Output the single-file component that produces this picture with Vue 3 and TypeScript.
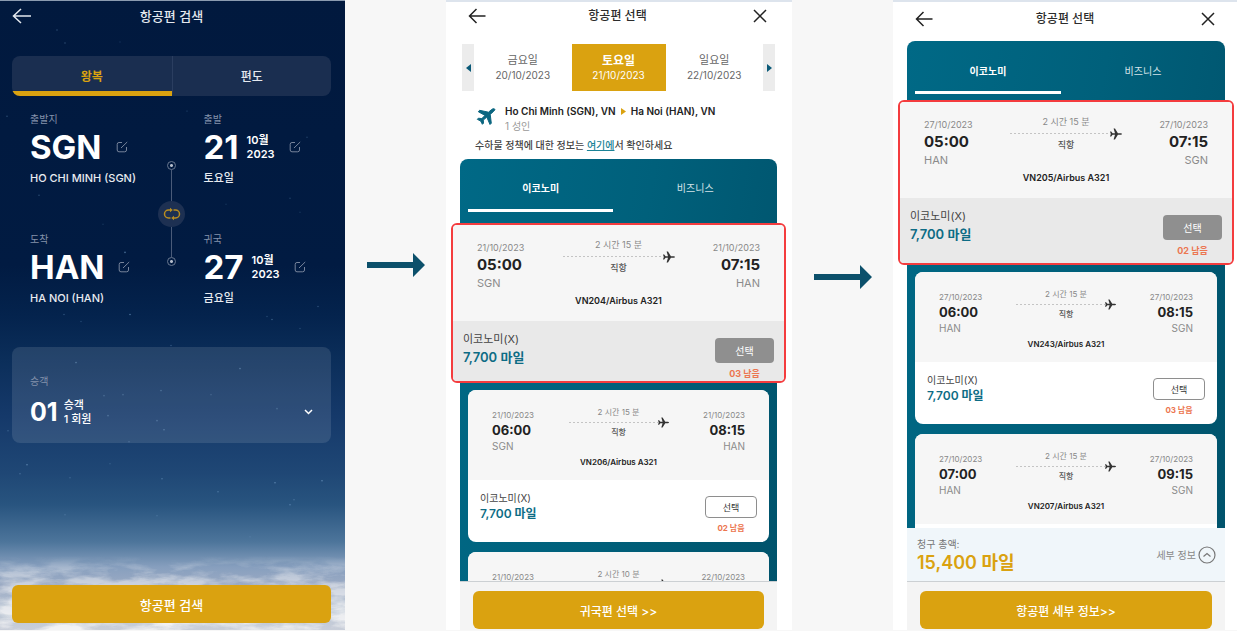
<script setup lang="ts">
import { ref } from 'vue'

interface Stop { date: string; time: string; code: string }
interface Flight { from: Stop; to: Stop; duration: string; plane: string; left: string; picked: boolean }
interface DayOption { weekday: string; date: string; active: boolean }
interface ResultScreen {
  id: string
  days: DayOption[]
  flights: Flight[]
  total: string
  action: string
}

const makeFlight = (
  from: [string, string, string],
  to: [string, string, string],
  duration: string,
  plane: string,
  left: string,
  picked = false,
): Flight => ({
  from: { date: from[0], time: from[1], code: from[2] },
  to: { date: to[0], time: to[1], code: to[2] },
  duration,
  plane,
  left,
  picked,
})

const trip = ref<'round' | 'oneway'>('round')

const legs = [
  { label: '출발지', code: 'SGN', city: 'HO CHI MINH (SGN)', dayLabel: '출발', day: '21', month: '10월', year: '2023', weekday: '토요일' },
  { label: '도착', code: 'HAN', city: 'HA NOI (HAN)', dayLabel: '귀국', day: '27', month: '10월', year: '2023', weekday: '금요일' },
]

const results: ResultScreen[] = [
  {
    id: 'outbound',
    days: [
      { weekday: '금요일', date: '20/10/2023', active: false },
      { weekday: '토요일', date: '21/10/2023', active: true },
      { weekday: '일요일', date: '22/10/2023', active: false },
    ],
    flights: [
      makeFlight(['21/10/2023', '05:00', 'SGN'], ['21/10/2023', '07:15', 'HAN'], '2 시간 15 분', 'VN204/Airbus A321', '03 남음', true),
      makeFlight(['21/10/2023', '06:00', 'SGN'], ['21/10/2023', '08:15', 'HAN'], '2 시간 15 분', 'VN206/Airbus A321', '02 남음'),
      makeFlight(['21/10/2023', '22:10', 'SGN'], ['22/10/2023', '00:20', 'HAN'], '2 시간 10 분', 'VN208/Airbus A321', '02 남음'),
    ],
    total: '',
    action: '귀국편 선택 >>',
  },
  {
    id: 'inbound',
    days: [],
    flights: [
      makeFlight(['27/10/2023', '05:00', 'HAN'], ['27/10/2023', '07:15', 'SGN'], '2 시간 15 분', 'VN205/Airbus A321', '02 남음', true),
      makeFlight(['27/10/2023', '06:00', 'HAN'], ['27/10/2023', '08:15', 'SGN'], '2 시간 15 분', 'VN243/Airbus A321', '03 남음'),
      makeFlight(['27/10/2023', '07:00', 'HAN'], ['27/10/2023', '09:15', 'SGN'], '2 시간 15 분', 'VN207/Airbus A321', '03 남음'),
    ],
    total: '15,400 마일',
    action: '항공편 세부 정보>>',
  },
]

const stars: [number, number, number][] = [
  [57, 29, 0.4], [65, 42, 0.4], [120, 41, 0.2], [7, 115, 0.4], [307, 136, 0.3], [132, 90, 0.3], [187, 110, 0.2],
  [39, 194, 0.4], [125, 251, 0.7], [290, 197, 0.3], [300, 211, 0.2], [226, 203, 0.2], [103, 223, 0.2],
  [64, 313, 0.4], [130, 313, 0.7], [272, 318, 0.5], [267, 315, 0.3], [318, 305, 0.4], [300, 327, 0.3], [81, 320, 0.3],
  [76, 361, 0.6], [240, 367, 0.6], [161, 389, 0.5], [104, 394, 0.4], [123, 393, 0.4], [211, 393, 0.3], [108, 414, 0.5],
  [157, 419, 0.5], [164, 428, 0.6], [129, 440, 0.4], [171, 344, 0.4], [8, 429, 0.4], [27, 463, 0.8], [20, 472, 0.5],
  [162, 477, 0.6], [275, 481, 0.8], [322, 479, 0.8], [218, 490, 0.6], [290, 503, 0.7], [294, 498, 0.5], [65, 513, 0.4],
  [157, 514, 0.4], [250, 535, 0.3], [277, 407, 0.4], [70, 476, 0.4], [110, 462, 0.3],
]
</script>

<template>
  <main class="board">
    <section class="screen search">
      <svg class="sky" viewBox="0 0 345 628" preserveAspectRatio="none" aria-hidden="true">
        <defs>
          <linearGradient id="cloudFade" x1="0" y1="0" x2="0" y2="1">
            <stop offset="0" stop-color="#fff" stop-opacity="0" />
            <stop offset="0.25" stop-color="#fff" stop-opacity="0.45" />
            <stop offset="1" stop-color="#fff" stop-opacity="1" />
          </linearGradient>
          <mask id="cloudMask"><rect x="0" y="554" width="345" height="74" fill="url(#cloudFade)" /></mask>
          <filter id="cloudNoise" x="0" y="0" width="1" height="1">
            <feTurbulence type="fractalNoise" baseFrequency="0.022 0.08" numOctaves="5" seed="8" />
            <feColorMatrix values="0 0 0 0 0.9  0 0 0 0 0.9  0 0 0 0 0.91  3.5 0 0 0 -1.4" />
          </filter>
        </defs>
        <circle v-for="(s, i) in stars" :key="i" :cx="s[0]" :cy="s[1]" r="0.8" fill="#6690ba" :opacity="s[2]" />
        <g mask="url(#cloudMask)"><rect x="0" y="554" width="345" height="74" filter="url(#cloudNoise)" /></g>
      </svg>

      <header class="bar">
        <button class="icon-btn" aria-label="뒤로">
          <svg width="20" height="16" viewBox="0 0 20 16"><path d="M19 8H1.5M9 1 1.5 8 9 15" /></svg>
        </button>
        <h1>항공편 검색</h1>
      </header>

      <div class="trip">
        <button :class="{ on: trip === 'round' }" @click="trip = 'round'">왕복</button>
        <button :class="{ on: trip === 'oneway' }" @click="trip = 'oneway'">편도</button>
      </div>

      <div class="legs">
        <div class="rows">
          <div v-for="leg in legs" :key="leg.code" class="leg">
            <div>
              <p class="hint">{{ leg.label }}</p>
              <p class="big">
                <span>{{ leg.code }}</span>
                <button class="edit" :aria-label="leg.label + ' 수정'">
                  <svg width="12" height="12" viewBox="0 0 12 12"><path d="M6 1.5H3A1.8 1.8 0 0 0 1.200 3.300V9A1.800 1.800 0 0 0 3 10.800H8.700A1.800 1.800 0 0 0 10.500 9V6M5 7 11.200 1" /></svg>
                </button>
              </p>
              <p class="sub">{{ leg.city }}</p>
            </div>
            <div>
              <p class="hint">{{ leg.dayLabel }}</p>
              <p class="big">
                <span>{{ leg.day }}</span>
                <span class="month">{{ leg.month }}<br />{{ leg.year }}</span>
                <button class="edit" :aria-label="leg.dayLabel + ' 수정'">
                  <svg width="12" height="12" viewBox="0 0 12 12"><path d="M6 1.5H3A1.8 1.8 0 0 0 1.200 3.300V9A1.800 1.800 0 0 0 3 10.800H8.700A1.800 1.800 0 0 0 10.500 9V6M5 7 11.200 1" /></svg>
                </button>
              </p>
              <p class="sub">{{ leg.weekday }}</p>
            </div>
          </div>
        </div>
        <div class="stem">
          <i class="ring"></i><i class="line"></i>
          <button class="swap" aria-label="출발지와 도착지 바꾸기">
            <svg width="18" height="14" viewBox="0 0 18 14">
              <path d="M7.500 11H5.500A4 4 0 0 1 5.500 3H8M10.500 3H12.500A4 4 0 0 1 12.500 11H10" />
              <path class="solid" d="M7 .8 9.800 3 7 5.200ZM11 8.800 8.200 11 11 13.200Z" />
            </svg>
          </button>
          <i class="line"></i><i class="ring"></i>
        </div>
      </div>

      <button class="party">
        <span class="hint">승객</span>
        <span class="party-row">
          <strong>01</strong>
          <span class="who">승객<br />1 회원</span>
          <svg width="9" height="6" viewBox="0 0 9 6"><path d="M1 1 4.500 4.500 8 1" /></svg>
        </span>
      </button>

      <button class="cta">항공편 검색</button>
    </section>

    <template v-for="screen in results" :key="screen.id">
      <div class="step">
        <svg width="58" height="24" viewBox="0 0 58 24" aria-hidden="true"><path d="M0 9H46V0L58 12 46 24V15H0Z" /></svg>
      </div>

      <section class="screen result" :class="screen.id">
        <header class="bar">
          <button class="icon-btn" aria-label="뒤로">
            <svg width="18" height="16" viewBox="0 0 18 16"><path d="M17.500 8H1.500M8.500 1 1.500 8 8.500 15" /></svg>
          </button>
          <h2>항공편 선택</h2>
          <button class="icon-btn close" aria-label="닫기">
            <svg width="14" height="14" viewBox="0 0 14 14"><path d="M1 1 13 13M13 1 1 13" /></svg>
          </button>
        </header>

        <template v-if="screen.days.length">
          <nav class="days">
            <button class="turn" aria-label="이전 날짜">
              <svg width="5" height="8" viewBox="0 0 5 8"><path d="M5 0V8L0 4Z" /></svg>
            </button>
            <button v-for="d in screen.days" :key="d.date" class="day" :class="{ active: d.active }">
              <b>{{ d.weekday }}</b>
              <span>{{ d.date }}</span>
            </button>
            <button class="turn" aria-label="다음 날짜">
              <svg width="5" height="8" viewBox="0 0 5 8"><path d="M0 0V8L5 4Z" /></svg>
            </button>
          </nav>
          <div class="route">
            <svg class="route-plane" width="20" height="18" viewBox="0 0 20 18">
              <path d="M18.600 1C17.800.3 16.500.8 15.500 1.600L12.500 4.200 3.600 2.300 2.300 3.700 9 7.400 5.800 10.600 2.400 10.200 1.300 11.300 4.700 13.100 6.400 16.300 7.500 15.200 7.300 12.100 10.800 9.100 14 16.500 15.300 15.200 14.200 6.400 17.700 3.300C18.700 2.400 19.200 1.600 18.600 1Z" />
            </svg>
            <div>
              <p class="cities">
                <span>Ho Chi Minh (SGN), VN</span>
                <svg width="5" height="7" viewBox="0 0 5 7"><path d="M0 0V7L5 3.500Z" /></svg>
                <span>Ha Noi (HAN), VN</span>
              </p>
              <p class="adults">1 성인</p>
            </div>
          </div>
          <p class="policy">수하물 정책에 대한 정보는 <a href="#">여기에</a>서 확인하세요</p>
        </template>

        <div class="panel">
          <div class="cabins">
            <button class="on">이코노미</button>
            <button>비즈니스</button>
          </div>
          <article v-for="f in screen.flights" :key="f.plane" class="card" :class="{ picked: f.picked }">
            <div class="info">
              <div class="times">
                <div class="stop">
                  <span class="date">{{ f.from.date }}</span>
                  <strong>{{ f.from.time }}</strong>
                  <span class="code">{{ f.from.code }}</span>
                </div>
                <div class="path">
                  <span class="duration">{{ f.duration }}</span>
                  <span class="track">
                    <i></i>
                    <svg viewBox="0 0 12 12"><path d="M0 3.500H1.200L2.600 5.200H5L3.600.5H5L7.900 5.200H10.700Q12 5.400 12 6 12 6.600 10.700 6.800H7.900L5 11.500H3.600L5 6.800H2.600L1.200 8.500H0L.8 6Z" /></svg>
                  </span>
                  <span class="direct">직항</span>
                </div>
                <div class="stop end">
                  <span class="date">{{ f.to.date }}</span>
                  <strong>{{ f.to.time }}</strong>
                  <span class="code">{{ f.to.code }}</span>
                </div>
              </div>
              <p class="aircraft">{{ f.plane }}</p>
            </div>
            <div class="fare">
              <div class="price">
                <span>이코노미(X)</span>
                <strong>7,700 마일</strong>
              </div>
              <div class="choose">
                <button>선택</button>
                <span>{{ f.left }}</span>
              </div>
            </div>
          </article>
        </div>

        <div v-if="screen.total" class="total">
          <div>
            <p>청구 총액:</p>
            <strong>{{ screen.total }}</strong>
          </div>
          <button>
            세부 정보
            <svg width="18" height="18" viewBox="0 0 18 18"><circle cx="9" cy="9" r="8" /><path d="M5.500 10.500 9 7.500 12.500 10.500" /></svg>
          </button>
        </div>
        <footer class="foot"><button class="cta">{{ screen.action }}</button></footer>
      </section>
    </template>
  </main>
</template>

<style>
body {
  margin: 0;
  background: #f7f7f7;
}
</style>

<style scoped>
.board {
  display: grid;
  grid-template-columns: 345fr 101fr 346fr 101fr 344fr;
  height: 100vh;
  min-height: 600px;
  box-sizing: border-box;
  padding-bottom: 1px;
  overflow: hidden;
  background: #f7f7f7;
  font-family: Inter, "Noto Sans CJK KR", sans-serif;
  color: #222;
}
.board *,
.board *::before {
  box-sizing: border-box;
}
p, h1, h2 {
  margin: 0;
}
button {
  margin: 0;
  padding: 0;
  border: 0;
  background: none;
  color: inherit;
  font: inherit;
  cursor: pointer;
}
svg {
  display: block;
  flex: none;
}
.screen {
  display: flex;
  flex-direction: column;
  min-width: 0;
  min-height: 0;
}
.bar {
  display: grid;
  grid-template-columns: 20px 1fr 20px;
  align-items: center;
  flex: none;
}
.bar h1, .bar h2 {
  text-align: center;
  font-size: 13px;
  font-weight: 500;
  line-height: 20px;
}
.bar h2 {
  font-size: 12px;
  color: #2c2c2c;
}
.icon-btn svg {
  fill: none;
  stroke: currentColor;
  stroke-width: 1.5;
}
.close {
  justify-self: end;
}
.cta {
  width: 100%;
  height: 38px;
  border-radius: 6px;
  background: #daa210;
  color: #fff;
  font-size: 13px;
  font-weight: 500;
}

/* Search screen */
.search {
  position: relative;
  padding: 0 14px 7px 12px;
  border-top: 1px solid #8b9bb0;
  background: linear-gradient(#01193e 0%, #011b42 42%, #04234d 50%, #0b2e5a 57%, #15396a 66%, #1f4775 75%, #28547f 80%, #4d759b 86%, #879fbe 90%, #9cabc4 93%, #bac6d5 97%, #c9ced9 100%);
  color: #fff;
}
.sky {
  position: absolute;
  inset: 0;
  width: 100%;
  height: 100%;
}
.search > :not(.sky) {
  position: relative;
}
.search .bar {
  height: 30px;
  color: #e4e8ee;
}
.trip {
  display: grid;
  grid-template-columns: 1fr 1fr;
  flex: none;
  height: 40px;
  margin-top: 25px;
  border-radius: 8px;
  overflow: hidden;
  background: #1a2e50;
  color: #e4e8ee;
}
.trip button {
  border-bottom: 5px solid transparent;
  padding-top: 4px;
  font-size: 12px;
  font-weight: 500;
}
.trip button + button {
  border-left: 1px solid #2b3e60;
}
.trip .on {
  border-bottom-color: #daa210;
  color: #daa210;
  font-weight: 700;
}
.legs {
  display: grid;
  flex: none;
  margin-top: 15px;
}
.rows, .stem {
  grid-area: 1 / 1;
}
.leg {
  display: grid;
  grid-template-columns: 173fr 127fr;
  height: 120px;
  padding-left: 18px;
}
.hint {
  font-size: 10px;
  line-height: 16px;
  color: #8492ab;
}
.big {
  display: flex;
  align-items: center;
  height: 40px;
  font-size: 33px;
  font-weight: 700;
}
.month {
  margin-left: 8px;
  font-size: 11px;
  font-weight: 600;
  line-height: 14px;
}
.edit {
  margin-left: 14px;
}
.edit svg {
  fill: none;
  stroke: #77849b;
  stroke-width: 1;
}
.sub {
  margin-top: 1px;
  font-size: 11px;
  font-weight: 500;
  line-height: 20px;
  color: #e8ebf0;
}
.stem {
  display: flex;
  flex-direction: column;
  align-items: center;
  justify-self: center;
  height: 105px;
  margin-top: 50px;
}
.ring {
  flex: none;
  width: 9px;
  height: 9px;
  border: 1px solid #68778f;
  border-radius: 50%;
  background: radial-gradient(#b3bccb 1px, transparent 2px);
}
.line {
  flex: 1;
  width: 1px;
  background: #4a5b79;
}
.swap {
  display: grid;
  place-items: center;
  width: 27px;
  height: 26px;
  border-radius: 50%;
  background: #1d3052;
}
.swap path {
  fill: none;
  stroke: #b98d21;
  stroke-width: 1.5;
}
.swap .solid {
  fill: #b98d21;
  stroke: none;
}
.party {
  display: block;
  flex: none;
  height: 96px;
  margin-top: -4px;
  padding: 8px 18px 0;
  border-radius: 8px;
  background: rgba(255, 255, 255, 0.11);
  text-align: left;
}
.party .hint {
  display: block;
}
.party-row {
  display: flex;
  align-items: center;
  height: 28px;
  margin-top: 9px;
}
.party strong {
  font-size: 25px;
}
.who {
  flex: 1;
  margin-left: 6px;
  font-size: 11px;
  font-weight: 500;
  line-height: 14px;
}
.party svg {
  fill: none;
  stroke: #fff;
  stroke-width: 1.5;
}
.search .cta {
  flex: none;
  margin-top: auto;
}

/* Arrows between screens */
.step {
  display: grid;
  place-items: center;
  margin-top: -101px;
  fill: #0c506b;
}
.step ~ .step {
  margin-top: -76px;
}

/* Result screens */
.result {
  border-top: 2px solid #dde4ed;
  padding: 0 15px 0 14px;
  background: #fff;
}
.inbound {
  padding-right: 12px;
}
.result .bar {
  height: 28px;
  margin: 0 10px 0 8px;
}
.result .icon-btn {
  color: #222;
}
.result.inbound .bar {
  height: 34px;
  margin-bottom: 5px;
}
.days {
  display: grid;
  grid-template-columns: 12px 1fr 94px 1fr 12px;
  flex: none;
  height: 47px;
  margin: 14px 2px 0;
}
.turn {
  display: grid;
  place-items: center;
  background: #ececec;
  fill: #0b5a78;
}
.day {
  color: #666;
  line-height: 15px;
}
.day b, .day span {
  display: block;
}
.day b {
  font-size: 11px;
  font-weight: 400;
}
.day span {
  font-size: 10px;
}
.day.active {
  background: #daa210;
  color: #fff;
}
.day.active b {
  font-size: 12px;
  font-weight: 700;
}
.route {
  display: flex;
  flex: none;
  gap: 9px;
  margin: 13px 16px 0;
}
.route-plane {
  margin-top: 4px;
  fill: #0b6680;
  stroke: #0b6680;
  stroke-width: 1;
  stroke-linejoin: round;
}
.cities {
  display: flex;
  align-items: center;
  gap: 5px;
  font-size: 10px;
  font-weight: 600;
  line-height: 15px;
  white-space: nowrap;
}
.cities svg {
  fill: #daa210;
}
.adults {
  font-size: 10px;
  line-height: 14px;
  color: #999;
}
.policy {
  margin: 4px 15px 6px;
  font-size: 10px;
  font-weight: 500;
  line-height: 16px;
  color: #444;
  white-space: nowrap;
}
.policy a {
  color: #1b8397;
}
.panel {
  flex: 1;
  min-height: 0;
  padding: 0 8px;
  border-radius: 8px 8px 0 0;
  background: linear-gradient(100deg, #006986 0%, #00607b 50%, #00536c 100%);
  overflow-x: visible;
  overflow-y: clip;
}
.cabins {
  display: grid;
  grid-template-columns: 145fr 163fr;
  height: 53px;
  margin: 0 -8px 11px 0;
}
.cabins button {
  padding-top: 7px;
  border-bottom: 3px solid transparent;
  font-size: 10px;
  color: #d5e4e9;
}
.cabins .on {
  border-bottom-color: #fff;
  color: #fff;
  font-weight: 700;
}
.inbound .cabins {
  margin-bottom: 6px;
}
.inbound .cabins button {
  padding-top: 9px;
}
.card {
  margin-bottom: 10px;
  border-radius: 8px;
  overflow: hidden;
  background: #fff;
}
.info {
  padding: 16px 24px 11px;
  background: #f6f6f6;
}
.times {
  display: grid;
  grid-template-columns: 1fr 100px 1fr;
}
.stop {
  display: flex;
  flex-direction: column;
  padding-top: 2px;
}
.end {
  align-items: flex-end;
}
.date {
  font-size: 8px;
  line-height: 14px;
  color: #888;
}
.stop strong {
  font-size: 13px;
  font-weight: 700;
  line-height: 16px;
}
.code {
  font-size: 10px;
  line-height: 16px;
  color: #8b8b8b;
}
.path {
  display: flex;
  flex-direction: column;
  text-align: center;
}
.duration {
  font-size: 8px;
  line-height: 12px;
  color: #888;
}
.track {
  display: flex;
  align-items: center;
  height: 8px;
}
.track i {
  flex: 1;
  height: 1px;
  background: repeating-linear-gradient(90deg, #c4c4c4 0 2px, transparent 2px 4px);
}
.track svg {
  width: 11px;
  height: 11px;
  fill: #333;
}
.direct {
  font-size: 8px;
  font-weight: 500;
  line-height: 13px;
  color: #555;
}
.aircraft {
  margin-top: 1px;
  text-align: center;
  font-size: 8px;
  font-weight: 600;
  line-height: 14px;
}
.fare {
  display: flex;
  justify-content: space-between;
  padding: 10px 12px 6px;
}
.price {
  display: flex;
  flex-direction: column;
  font-size: 10px;
  line-height: 16px;
  color: #444;
}
.price strong {
  font-size: 12px;
  font-weight: 600;
  color: #0d6c85;
}
.choose {
  display: flex;
  flex-direction: column;
  align-items: center;
  padding-top: 6px;
}
.choose button {
  width: 52px;
  height: 22px;
  border: 1px solid #8e8e8e;
  border-radius: 4px;
  font-size: 9px;
  color: #333;
}
.choose span {
  margin-top: 2px;
  font-size: 8px;
  font-weight: 700;
  line-height: 16px;
  color: #ec7650;
}

/* Highlighted flight, wider than the panel */
.picked {
  margin: 0 -17px 7px;
  border: 2px solid #f43c3e;
  border-radius: 6px;
}
.picked .info {
  padding: 13px 24px 12px;
}
.picked .times {
  grid-template-columns: 1fr 112px 1fr;
}
.picked .date {
  font-size: 9px;
  line-height: 16px;
}
.picked .stop strong {
  font-size: 15px;
  line-height: 18px;
}
.picked .code {
  font-size: 11px;
  line-height: 18px;
}
.picked .duration {
  font-size: 9px;
  line-height: 14px;
}
.picked .track {
  height: 9px;
}
.picked .track svg {
  width: 12px;
  height: 12px;
}
.picked .direct {
  font-size: 9px;
  line-height: 14px;
}
.picked .aircraft {
  font-size: 9px;
  line-height: 16px;
}
.picked .fare {
  padding: 9px 10px 0;
  background: #e9e9e9;
}
.picked .price {
  font-size: 11px;
  line-height: 18px;
}
.picked .price strong {
  font-size: 13px;
}
.picked .choose {
  padding-top: 8px;
}
.picked .choose button {
  width: 59px;
  height: 25px;
  border: 0;
  background: #8f8f8f;
  color: #fff;
  font-size: 10px;
}
.picked .choose span {
  margin-top: 4px;
  font-size: 9px;
  line-height: 14px;
}
.inbound .picked .fare {
  padding-bottom: 5px;
}
.total {
  display: flex;
  justify-content: space-between;
  align-items: center;
  flex: none;
  height: 53px;
  padding: 0 9px 0 10px;
  background: #f0f6fa;
}
.total p {
  font-size: 10px;
  line-height: 16px;
  color: #777;
}
.total strong {
  display: block;
  font-size: 18px;
  font-weight: 600;
  line-height: 22px;
  color: #daa210;
}
.total button {
  display: flex;
  align-items: center;
  gap: 2px;
  font-size: 10px;
  color: #888;
}
.total svg {
  fill: none;
  stroke: #777;
  stroke-width: 1.2;
}
.foot {
  flex: none;
  padding: 9px 13px 1px;
  border-top: 1px solid #ccd0d3;
  background: #f4f4f4;
}
.foot .cta {
  font-size: 12px;
}
</style>
